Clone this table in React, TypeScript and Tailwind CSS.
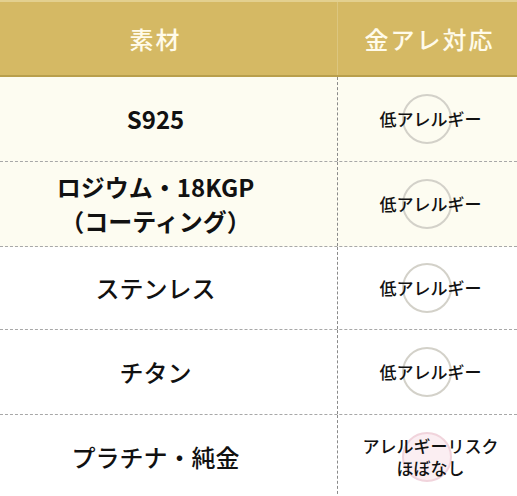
import React from "react"

const rows = [
  { name: ["S925"], bold: true, cream: true, note: ["低アレルギー"], h: "h-[85px]" },
  { name: ["ロジウム・18KGP", "（コーティング）"], bold: true, cream: true, note: ["低アレルギー"], h: "h-[85px]" },
  { name: ["ステンレス"], bold: false, cream: false, note: ["低アレルギー"], h: "h-[83px]" },
  { name: ["チタン"], bold: false, cream: false, note: ["低アレルギー"], h: "h-[85px]" },
  { name: ["プラチナ・純金"], bold: false, cream: false, note: ["アレルギーリスク", "ほぼなし"], h: "h-[85px]", pink: true },
]

export default function App() {
  return (
    <div className="w-[517px] h-[496px] overflow-hidden bg-white text-[#111] font-['Noto_Sans_CJK_JP','Noto_Sans',sans-serif]">
      {/* Header */}
      <div className="grid grid-cols-[338px_179px] h-[77px] bg-[#d5b964] border-t-2 border-t-[#e3d08f] border-b-2 border-b-[#b99f4c]">
        <div className="flex items-center justify-center pr-[26px] text-[24px] font-medium tracking-[2px] text-[#fffbea] border-r border-r-[#dcc67f]">
          素材
        </div>
        <div className="flex items-center justify-center pl-[4px] text-[24px] font-medium tracking-[2px] text-[#fffbea]">
          金アレ対応
        </div>
      </div>

      {/* Body */}
      {rows.map((r, i) => (
        <div
          key={i}
          className={`grid grid-cols-[338px_179px] ${r.h} ${r.cream ? "bg-[#fdfcf1]" : "bg-white"} border-b border-dashed border-[#a8a8a8]`}
        >
          <div className={`flex flex-col items-center justify-center pr-[26px] text-[24px] leading-[1.4] ${r.bold ? "font-bold" : "font-medium"} border-r border-dashed border-[#8a8a8a]`}>
            {r.name.map((n) => (
              <span key={n}>{n}</span>
            ))}
          </div>
          <div className="relative flex flex-col items-center justify-center pl-[6px] text-[17px] leading-[1.3] font-medium">
            {r.pink ? (
              <div className="absolute left-[64px] top-1/2 -translate-y-1/2 w-[50px] h-[50px] rounded-full border-2 border-[#f1d4dc] bg-[#fbeef2]" />
            ) : (
              <div className="absolute left-[64px] top-1/2 -translate-y-1/2 w-[50px] h-[50px] rounded-full border-2 border-[#d3d1c9]" />
            )}
            {r.note.map((n) => (
              <span key={n} className="relative">{n}</span>
            ))}
          </div>
        </div>
      ))}
    </div>
  )
}
